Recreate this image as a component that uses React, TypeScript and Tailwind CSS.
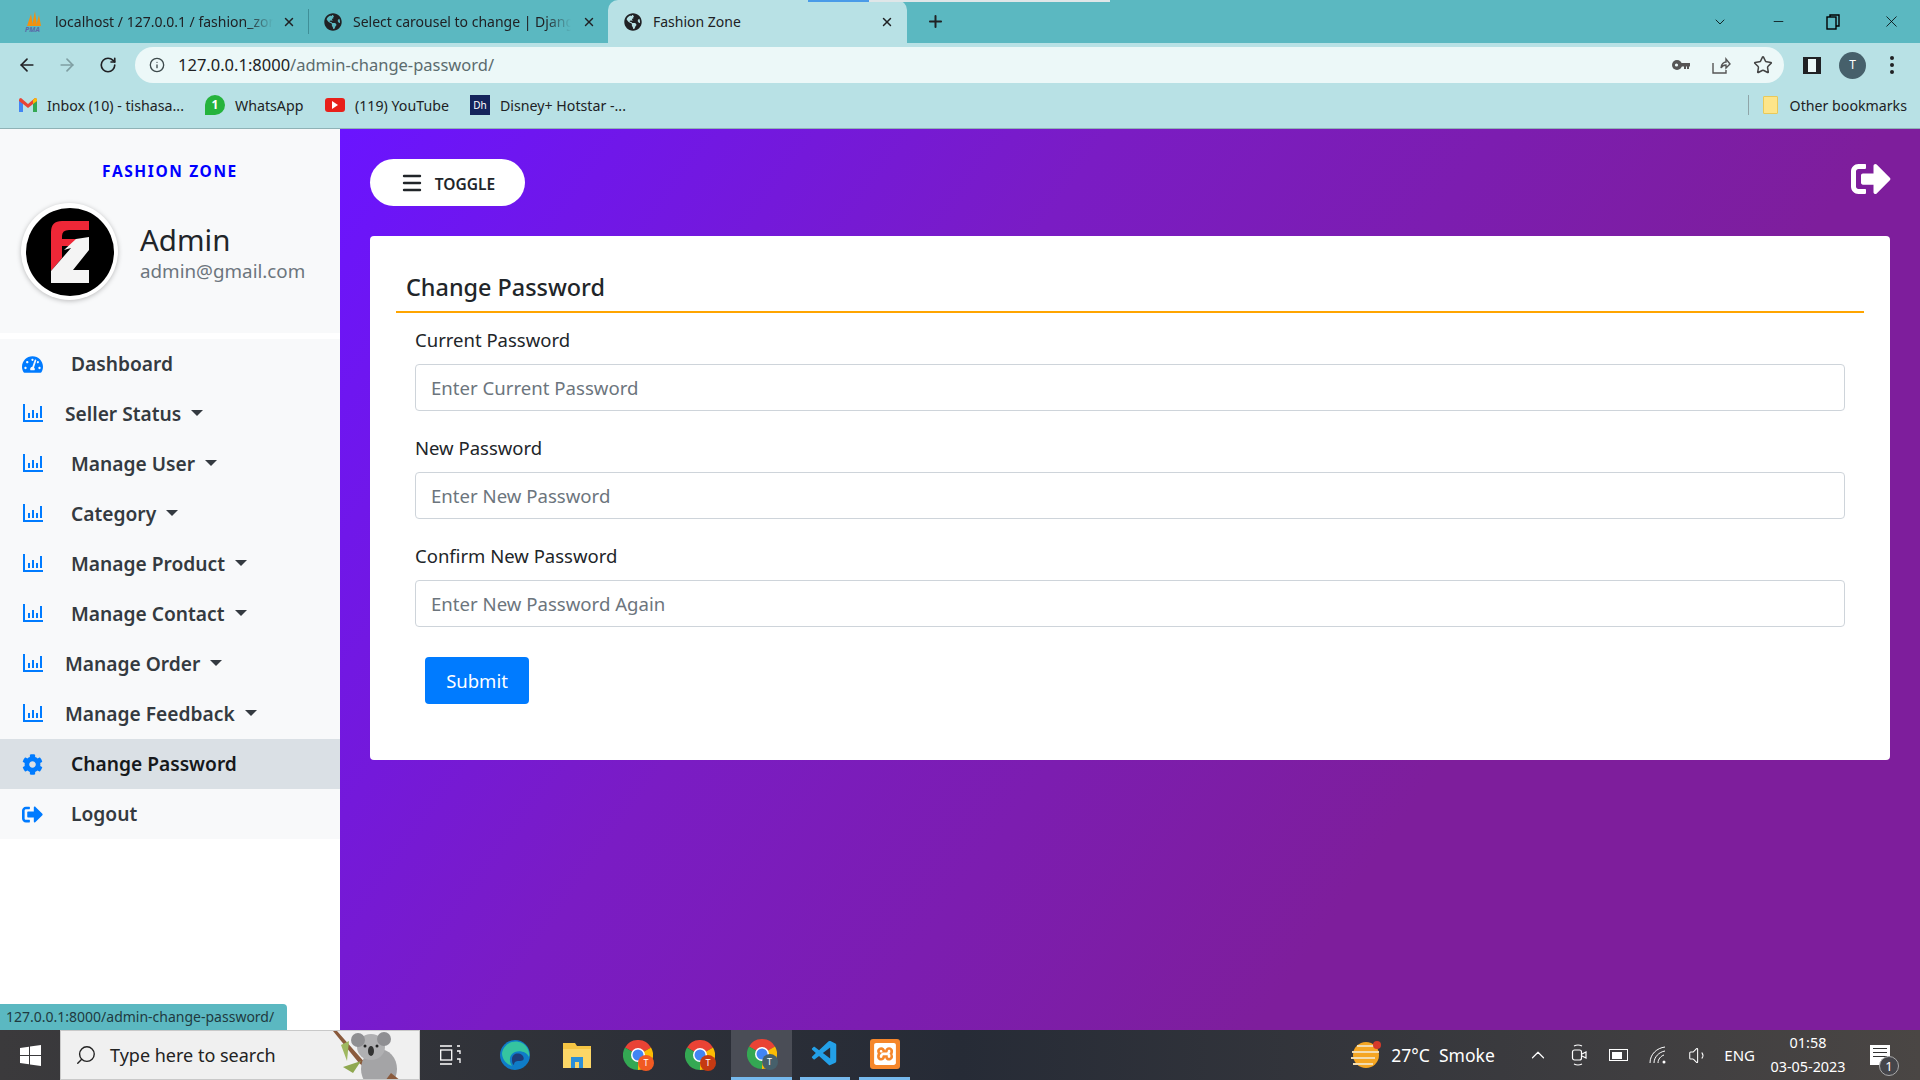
import { FaTachometerAlt, FaCog, FaSignOutAlt, FaGlobeAmericas } from 'react-icons/fa';
import { VscVscode } from 'react-icons/vsc';
import { SiXampp } from 'react-icons/si';
import { ArrowLeft, ArrowRight, RotateCw, Info, Star, X, Plus, ChevronDown, Minus, Search, ChevronUp, Volume1, Menu } from 'lucide-react';

const menuItems = [
  { label: 'Dashboard', icon: 'dash', tight: false, caret: false },
  { label: 'Seller Status', icon: 'chart', tight: true, caret: true },
  { label: 'Manage User', icon: 'chart', tight: false, caret: true },
  { label: 'Category', icon: 'chart', tight: false, caret: true },
  { label: 'Manage Product', icon: 'chart', tight: false, caret: true },
  { label: 'Manage Contact', icon: 'chart', tight: false, caret: true },
  { label: 'Manage Order', icon: 'chart', tight: true, caret: true },
  { label: 'Manage Feedback', icon: 'chart', tight: true, caret: true },
  { label: 'Change Password', icon: 'cog', tight: false, caret: false, active: true },
  { label: 'Logout', icon: 'out', tight: false, caret: false },
];

const fields = [
  { label: 'Current Password', placeholder: 'Enter Current Password' },
  { label: 'New Password', placeholder: 'Enter New Password' },
  { label: 'Confirm New Password', placeholder: 'Enter New Password Again' },
];

function ChartIcon() {
  return (
    <svg width="20" height="18" viewBox="0 0 20 18" fill="#007bff" className="-mt-[2px]">
      <rect x="0" y="0" width="2" height="18" />
      <rect x="0" y="16" width="20" height="2" />
      <rect x="5" y="9" width="2" height="5" />
      <rect x="9" y="6" width="2" height="8" />
      <rect x="13" y="9" width="2" height="5" />
      <rect x="17" y="2" width="2" height="12" />
    </svg>
  );
}

function MenuIcon({ kind }: { kind: string }) {
  if (kind === 'dash') return <FaTachometerAlt size={23} color="#007bff" />;
  if (kind === 'cog') return <FaCog size={21} color="#007bff" />;
  if (kind === 'out') return <FaSignOutAlt size={21} color="#007bff" />;
  return <ChartIcon />;
}

function LogoFZ() {
  return (
    <svg width="88" height="88" viewBox="0 0 88 88">
      <circle cx="44" cy="44" r="44" fill="#000" />
      <path d="M25 63 L25 24 Q25 13 36 13 L63 13 L63 22 L43 22 Q36 22 36 28 L36 31 L52 31 L44 38 L36 38 L36 50Z" fill="#ee2737" />
      <path d="M50 31 L63 29 L63 42 L47 62 L63 62 L63 75 L25 75 L25 63 L45 40 L38 42Z" fill="#f4f4f4" />
    </svg>
  );
}

function GmailIcon() {
  return (
    <svg width="18" height="14" viewBox="0 0 18 14">
      <path d="M0 2 L0 14 L4 14 L4 5Z" fill="#4285f4" />
      <path d="M18 2 L18 14 L14 14 L14 5Z" fill="#34a853" />
      <path d="M0 2 Q0 0 2 0 L9 6 L16 0 Q18 0 18 2 L18 3 L14 6 L9 10 L4 6 L0 3Z" fill="#ea4335" />
      <path d="M14 6 L18 3 L18 1.5 Q18 0 16 0 L14 2Z" fill="#fbbc04" />
    </svg>
  );
}

function ChromeIcon({ badge }: { badge: string }) {
  return (
    <div className="relative w-[30px] h-[30px]">
      <svg width="30" height="30" viewBox="0 0 30 30">
        <path d="M15 15 L2 7.5 A15 15 0 0 1 28 7.5Z" fill="#ea4335" />
        <path d="M15 15 L28 7.5 A15 15 0 0 1 15 30Z" fill="#fbbc04" />
        <path d="M15 15 L15 30 A15 15 0 0 1 2 7.5Z" fill="#34a853" />
        <circle cx="15" cy="15" r="7" fill="#fff" />
        <circle cx="15" cy="15" r="5.5" fill="#4285f4" />
      </svg>
      <div className={`absolute -right-[1px] bottom-[-1px] w-[16px] h-[16px] rounded-full flex items-center justify-center text-[9px] text-white ${badge}`}>T</div>
    </div>
  );
}

function Koala() {
  return (
    <svg width="84" height="50" viewBox="0 0 84 50">
      <path d="M8 0 L38 34 L64 50 L52 50 L30 32 L4 0Z" fill="#8a5a3c" />
      <path d="M12 14 L20 10 L18 30Z" fill="#9fb860" />
      <path d="M14 36 L32 30 L24 42Z" fill="#8fa850" />
      <ellipse cx="50" cy="38" rx="18" ry="20" fill="#a4a4a6" />
      <ellipse cx="42" cy="16" rx="14" ry="13" fill="#b0b0b2" />
      <circle cx="29" cy="9" r="7" fill="#8f8f92" />
      <circle cx="55" cy="8" r="7" fill="#8f8f92" />
      <ellipse cx="42" cy="20" rx="3" ry="5" fill="#333" />
      <circle cx="36" cy="15" r="1.5" fill="#222" />
      <circle cx="48" cy="15" r="1.5" fill="#222" />
      <path d="M56 50 L62 42 L72 50Z" fill="#8a5a3c" />
    </svg>
  );
}

function BrowserChrome() {
  return (
    <div className="shrink-0 text-[#202124]">
      {/* tab strip */}
      <div className="relative h-[43px] bg-[#5bb8c1] flex text-[14px]">
        <div className="absolute top-0 left-[808px] w-[61px] h-[2px] bg-[#4a9be8]" />
        <div className="absolute top-0 left-[869px] w-[241px] h-[2px] bg-[#dfe6e8]" />
        <div className="w-[309px] flex items-center pl-[24px] pr-[12px] border-r border-[#3f8f98] my-[9px]">
          <svg width="20" height="22" viewBox="0 0 20 22" className="shrink-0">
            <path d="M3 15 L7 3 L9 15Z" fill="#f29111" />
            <path d="M8 15 L11 0 L13 15Z" fill="#f29111" />
            <path d="M12 15 L15 4 L17 15Z" fill="#f29111" />
            <text x="1" y="21" fontSize="7" fontWeight="700" fontStyle="italic" fill="#5a6aa8">PMA</text>
          </svg>
          <span className="ml-[11px] w-[218px] overflow-hidden whitespace-nowrap [mask-image:linear-gradient(to_right,black_88%,transparent)]">localhost / 127.0.0.1 / fashion_zone</span>
          <X size={14} strokeWidth={2.5} className="ml-auto shrink-0" />
        </div>
        <div className="w-[299px] flex items-center pl-[15px] pr-[12px] my-[9px]">
          <FaGlobeAmericas size={18} className="shrink-0" />
          <span className="ml-[11px] w-[218px] overflow-hidden whitespace-nowrap [mask-image:linear-gradient(to_right,black_88%,transparent)]">Select carousel to change | Django</span>
          <X size={14} strokeWidth={2.5} className="ml-auto shrink-0" />
        </div>
        <div className="w-[299px] flex items-center pl-[16px] pr-[13px] bg-[#b8e1e5] rounded-t-[10px]">
          <FaGlobeAmericas size={18} className="shrink-0" />
          <span className="ml-[11px]">Fashion Zone</span>
          <X size={14} strokeWidth={2.5} className="ml-auto shrink-0" />
        </div>
        <div className="ml-[19px] flex items-center">
          <Plus size={19} strokeWidth={2.5} />
        </div>
        <div className="ml-auto flex items-center text-black">
          <ChevronDown size={16} strokeWidth={1.2} className="mr-[43px]" />
          <Minus size={15} strokeWidth={1.2} className="mr-[40px]" />
          <svg width="14" height="16" viewBox="0 0 14 16" fill="none" stroke="#000" strokeWidth="1.4" className="mr-[42px]">
            <rect x="1" y="3" width="9" height="12" />
            <path d="M4 3 V1 H13 V12 H10" />
          </svg>
          <X size={19} strokeWidth={1} className="mr-[19px]" />
        </div>
      </div>
      {/* toolbar */}
      <div className="h-[41px] bg-[#b8e1e5] flex items-center pt-[3px]">
        <ArrowLeft size={20} strokeWidth={2} className="ml-[17px]" />
        <ArrowRight size={20} strokeWidth={2} className="ml-[20px] text-[#7f9ea2]" />
        <RotateCw size={18} strokeWidth={2.2} className="ml-[22px]" />
        <div className="ml-[18px] w-[1649px] h-[36px] bg-[#ecf8f8] rounded-full flex items-center text-[16.5px]">
          <Info size={16} strokeWidth={2} className="ml-[14px] text-[#3d4a4c]" />
          <span className="ml-[13px]">127.0.0.1:8000<span className="text-[#5b6b6e]">/admin-change-password/</span></span>
          <svg width="18" height="12" viewBox="0 0 18 12" fill="#555" className="ml-auto">
            <circle cx="5" cy="6" r="5" />
            <rect x="9" y="4" width="9" height="3.5" />
            <rect x="12" y="7" width="2" height="3" />
            <rect x="15" y="7" width="2" height="3" />
            <circle cx="4.5" cy="6" r="1.6" fill="#ecf8f8" />
          </svg>
          <svg width="19" height="19" viewBox="0 0 19 19" fill="none" stroke="#555" strokeWidth="1.4" className="ml-[22px]">
            <path d="M9 12 C9 8 12 6 14 6 V3 L18 8 L14 12 V9 C12 9 10 10 9 12Z" />
            <path d="M1 7 V17 H14 V14" />
          </svg>
          <Star size={20} strokeWidth={1.8} className="ml-[22px] mr-[11px] text-[#444]" />
        </div>
        <div className="ml-[19px] w-[18px] h-[17px] border-x-[5px] border-y-[2px] border-[#202124] border-r-[5px] bg-[#ecf8f8]" />
        <div className="ml-[18px] w-[27px] h-[27px] rounded-full bg-[#46606b] text-white text-[12px] flex items-center justify-center">T</div>
        <div className="ml-[24px] flex flex-col gap-[3px]">
          <span className="w-[4px] h-[4px] rounded-full bg-[#202124]" />
          <span className="w-[4px] h-[4px] rounded-full bg-[#202124]" />
          <span className="w-[4px] h-[4px] rounded-full bg-[#202124]" />
        </div>
      </div>
      {/* bookmarks */}
      <div className="h-[45px] pb-[1px] bg-[#b8e1e5] border-b border-[#8fb2b6] flex items-center text-[14.2px]">
        <div className="ml-[19px] w-[186px] flex items-center">
          <GmailIcon />
          <span className="ml-[10px]">Inbox (10) - tishasa...</span>
        </div>
        <div className="w-[120px] flex items-center">
          <span className="w-[20px] h-[20px] rounded-full rounded-bl-[4px] bg-[#25b33c] text-white flex items-center justify-center text-[12px] font-bold">1</span>
          <span className="ml-[10px]">WhatsApp</span>
        </div>
        <div className="w-[145px] flex items-center">
          <span className="w-[20px] h-[14px] rounded-[3px] bg-[#e8201a] flex items-center justify-center">
            <span className="w-0 h-0 border-y-[4px] border-y-transparent border-l-[6px] border-l-white" />
          </span>
          <span className="ml-[10px]">(119) YouTube</span>
        </div>
        <div className="flex items-center">
          <span className="w-[20px] h-[20px] bg-[#14245c] text-white flex items-center justify-center text-[10px]">Dh</span>
          <span className="ml-[10px]">Disney+ Hotstar -...</span>
        </div>
        <div className="ml-auto flex items-center">
          <div className="w-px h-[20px] bg-[#8fa5a8] mr-[14px]" />
          <div className="w-[15px] h-[18px] bg-[#fde58a] border border-[#e9c95a] rounded-[1px]" />
          <span className="ml-[12px] mr-[13px]">Other bookmarks</span>
        </div>
      </div>
    </div>
  );
}

function Sidebar() {
  return (
    <aside className="relative w-[340px] shrink-0 bg-white flex flex-col">
      <div className="h-[204px] bg-[#f8f9fa] pt-[32px] shrink-0">
        <div className="text-center text-[15.5px] leading-[20px] font-bold tracking-[1.6px] text-[#0000ff]">FASHION ZONE</div>
        <div className="flex items-center mt-[22px] ml-[21px]">
          <div className="w-[97px] h-[97px] rounded-full bg-white shadow-[0_1px_5px_rgba(0,0,0,0.25)] flex items-center justify-center">
            <LogoFZ />
          </div>
          <div className="ml-[22px] mt-[2px]">
            <div className="text-[29.5px] leading-[36px] text-[#212529]">Admin</div>
            <div className="text-[18.8px] leading-[26px] text-[#6c757d]">admin@gmail.com</div>
          </div>
        </div>
      </div>
      <div className="h-[6px] shrink-0" />
      <div className="bg-[#f8f9fa]">
        {menuItems.map(item => (
          <div key={item.label} className={`h-[50px] flex items-center pl-[22px] ${item.active ? 'bg-[#dae0e5] text-[#16181b]' : 'text-[#343a40]'}`}>
            <span className="w-[21px] flex justify-center">
              <MenuIcon kind={item.icon} />
            </span>
            <span className={`text-[19.2px] font-semibold ${item.tight ? 'ml-[22px]' : 'ml-[28px]'}`}>{item.label}</span>
            {item.caret && <span className="ml-[10px] -mt-[3px] w-0 h-0 border-x-[6px] border-x-transparent border-t-[6px] border-t-[#343a40]" />}
          </div>
        ))}
      </div>
      <div className="absolute left-0 bottom-0 w-[287px] h-[26px] bg-[#5bb8c1] rounded-tr-[4px] flex items-center pl-[6px] pb-[1px] text-[14px] text-[#1f3a40]">
        127.0.0.1:8000/admin-change-password/
      </div>
    </aside>
  );
}

function PasswordForm() {
  return (
    <div className="bg-white rounded-[4px] h-[524px] px-[26px] pt-[28px]">
      <div className="h-[49px] pt-[1px] border-b-2 border-[#ffa500] pl-[10px] flex items-center text-[23.4px] font-medium text-[#212529]">
        Change Password
      </div>
      <form className="px-[19px] pt-[15px]">
        {fields.map(field => (
          <div key={field.label} className="mb-[25px]">
            <label className="block h-[24px] leading-[24px] text-[18.5px] text-[#212529] mb-[12px]">{field.label}</label>
            <input
              type="password"
              placeholder={field.placeholder}
              className="block w-full h-[47px] px-[15px] text-[18.6px] border border-[#ced4da] rounded-[4px] text-[#495057] placeholder:text-[#6c757d]"
            />
          </div>
        ))}
        <button type="button" className="ml-[10px] mt-[5px] w-[104px] h-[47px] bg-[#007bff] rounded-[4px] text-white text-[18.5px]">
          Submit
        </button>
      </form>
    </div>
  );
}

function Taskbar() {
  return (
    <div className="relative h-[50px] shrink-0 flex items-center text-white bg-gradient-to-r from-[#3b3a3c] via-[#262b36] to-[#4a4644]">
      <div className="w-[60px] flex justify-center">
        <svg width="21" height="21" viewBox="0 0 21 21" fill="#fff">
          <path d="M0 3 L9 1.7 V10 H0Z" />
          <path d="M10 1.5 L21 0 V10 H10Z" />
          <path d="M0 11 H9 V19.3 L0 18Z" />
          <path d="M10 11 H21 V21 L10 19.5Z" />
        </svg>
      </div>
      <div className="w-[360px] h-[50px] bg-[#f0f0f0] border border-[#c9c9c9] flex items-center text-[#222] text-[18px] overflow-hidden">
        <Search size={22} strokeWidth={1.5} className="ml-[14px] -scale-x-100" />
        <span className="ml-[13px]">Type here to search</span>
        <div className="ml-auto mt-[1px] mr-[6px]">
          <Koala />
        </div>
      </div>
      <div className="w-[60px] mr-[4px] flex justify-center">
        <svg width="21" height="20" viewBox="0 0 21 20" fill="none" stroke="#fff" strokeWidth="1.3">
          <path d="M0 1 H12 M0 19 H12" />
          <rect x="0.7" y="5" width="11" height="10" />
          <path d="M17 1 H20 M17 6 H20 V9 M17 14 H20 V18" />
        </svg>
      </div>
      <div className="w-[62px] flex justify-center">
        <svg width="30" height="30" viewBox="0 0 30 30">
          <circle cx="15" cy="15" r="15" fill="#0f7cc8" />
          <path d="M2 13 C4 3 14 -1 22 3 C28 6 30 13 29 17 C27 12 20 10 15 12 C10 14 8 20 12 26 C6 24 2 19 2 13Z" fill="#35c4a0" />
          <path d="M12 19 C12 14 18 12 22 15 C25 18 24 21 20 21 C17 21 14 21 14 25 C12 24 12 21 12 19Z" fill="#1d3d78" />
        </svg>
      </div>
      <div className="w-[61px] flex justify-center">
        <svg width="28" height="27" viewBox="0 0 28 27">
          <path d="M0 1 H12 L14 4 H28 V26 H0Z" fill="#f6c544" />
          <rect x="0" y="7" width="28" height="19" fill="#fcd667" />
          <rect x="8" y="15" width="12" height="11" fill="#2c8fd8" />
          <rect x="12" y="20" width="4" height="6" fill="#fcd667" />
        </svg>
      </div>
      <div className="w-[62px] flex justify-center"><ChromeIcon badge="bg-[#f15a22]" /></div>
      <div className="w-[62px] flex justify-center"><ChromeIcon badge="bg-[#c53a12]" /></div>
      <div className="w-[61px] h-[50px] bg-[#4a4d56] flex justify-center items-center border-b-[3px] border-[#76b9ed]"><ChromeIcon badge="bg-[#46606b]" /></div>
      <div className="w-[65px] h-[50px] flex justify-center items-center">
        <div className="w-[50px] h-[50px] flex justify-center items-center border-b-[3px] border-[#76b9ed]">
          <VscVscode size={30} color="#23a0e8" />
        </div>
      </div>
      <div className="h-[50px] w-[51px] ml-[2px] flex justify-center items-center border-b-[3px] border-[#76b9ed]">
        <div className="w-[30px] h-[30px] bg-[#f5862b] rounded-[3px] flex items-center justify-center">
          <SiXampp size={22} color="#fff" />
        </div>
      </div>
      {/* tray */}
      <div className="ml-auto flex items-center">
        <svg width="30" height="30" viewBox="0 0 30 30" className="mr-[10px]">
          <circle cx="15" cy="15" r="13" fill="#f5a623" />
          <path d="M1 12 H28 M0 18 H24 M2 24 H22 M6 6 H26" stroke="#f2dcb0" strokeWidth="2" />
          <circle cx="26" cy="5" r="4" fill="#d63a2a" />
        </svg>
        <span className="text-[17.5px] w-[111px]">27°C&nbsp; Smoke</span>
        <ChevronUp size={22} strokeWidth={1.3} className="ml-[25px]" />
        <svg width="16" height="22" viewBox="0 0 16 22" fill="none" stroke="#fff" strokeWidth="1.2" className="ml-[22px]">
          <rect x="1.5" y="6" width="9" height="10" rx="2" />
          <path d="M11 10 L15 8 V14 L11 12" />
          <path d="M3 2 Q7 0 11 2 M3 20 Q7 22 11 20" />
        </svg>
        <div className="ml-[22px] w-[19px] h-[12px] border border-white flex items-center p-[1.5px]">
          <div className="w-[10px] h-full bg-white" />
        </div>
        <svg width="18" height="18" viewBox="0 0 18 18" fill="none" stroke="#fff" strokeWidth="1" className="ml-[21px]">
          <path d="M1 17 C1 8 8 2 16 1 M5 17 C5 11 10 6 16 5 M9 17 C9 13 12 10 15 9" />
          <circle cx="15" cy="16" r="1.5" fill="#fff" stroke="none" />
        </svg>
        <Volume1 size={21} strokeWidth={1.2} className="ml-[21px]" />
        <span className="ml-[15px] text-[15px]">ENG</span>
        <div className="ml-[10px] w-[86px] text-center text-[14.4px] leading-[24px]">
          <div>01:58</div>
          <div>03-05-2023</div>
        </div>
        <div className="relative ml-[19px] mr-[30px] w-[20px] h-[20px] bg-white flex flex-col gap-[3px] p-[3px]">
          <div className="h-px bg-[#333]" />
          <div className="h-px bg-[#333]" />
          <div className="h-px bg-[#333]" />
          <div className="absolute -right-[9px] -bottom-[11px] w-[20px] h-[20px] rounded-full bg-[#45454a] border border-[#aaa] text-[13px] leading-[18px] text-center">1</div>
        </div>
      </div>
    </div>
  );
}

export default function App() {
  return (
    <div className="w-[1920px] h-[1080px] flex flex-col overflow-hidden font-['Noto_Sans','Open_Sans',sans-serif]">
      <BrowserChrome />
      <div className="flex-1 flex min-h-0">
        <Sidebar />
        <main className="flex-1 px-[30px] pt-[30px] bg-[linear-gradient(125deg,#6a14ff_0%,#7a1cc4_35%,#7e1e9c_70%,#7e1e9c_100%)]">
          <div className="h-[77px] flex items-start justify-between">
            <button type="button" className="w-[155px] h-[47px] bg-white rounded-full flex items-center justify-center text-[15.5px] font-semibold text-[#212529]">
              <Menu size={24} strokeWidth={2.4} />
              <span className="ml-[11px] mt-[4px]">TOGGLE</span>
            </button>
            <FaSignOutAlt size={40} color="#fff" className="mr-[-1px]" />
          </div>
          <PasswordForm />
        </main>
      </div>
      <Taskbar />
    </div>
  );
}
